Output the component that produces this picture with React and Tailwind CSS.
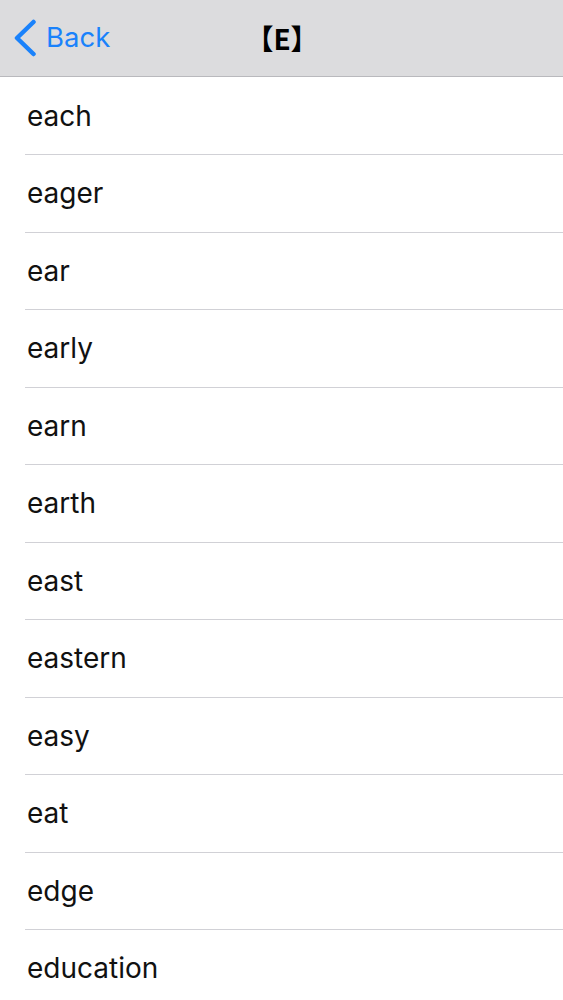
import React from 'react';

const words = ['each', 'eager', 'ear', 'early', 'earn', 'earth', 'east', 'eastern', 'easy', 'eat', 'edge', 'education'];

const NavBar = () => (
  <div className="h-[77px] bg-[#dcdcde] border-b border-[#b9b9bd] flex items-center relative">
    <div className="flex items-center pl-[13px] gap-[9px] text-[#1a82fb]">
      <svg width="24" height="38" viewBox="0 0 24 38" fill="none">
        <path d="M20.5 3 L4 19 L20.5 35" stroke="currentColor" strokeWidth="4.5" strokeLinecap="round" strokeLinejoin="round" />
      </svg>
      <span className="text-[27.5px] leading-none">Back</span>
    </div>
    {/* title */}
    <div className="absolute left-0 right-0 top-0 bottom-0 flex items-center justify-center pointer-events-none">
      <span className="text-[28px] font-bold text-black pl-[1px]" style={{ fontFamily: '"Noto Sans CJK SC", sans-serif' }}>【E】</span>
    </div>
  </div>
);

const WordRow = ({ word, first }) => (
  <div className="pl-[25px]">
    <div className={`${first ? 'h-[78px]' : 'h-[77.5px]'} border-b border-[#d1d1d6] flex items-center pl-[2px]`}>
      <span className="text-[28px] text-[#111]">{word}</span>
    </div>
  </div>
);

export default function App() {
  return (
    <div className="w-[563px] h-[1000px] overflow-hidden bg-white" style={{ fontFamily: 'Inter, "Noto Sans", sans-serif' }}>
      <NavBar />
      <div>
        {words.map((w, i) => (
          <WordRow key={w} word={w} first={i === 0} />
        ))}
      </div>
    </div>
  );
}
